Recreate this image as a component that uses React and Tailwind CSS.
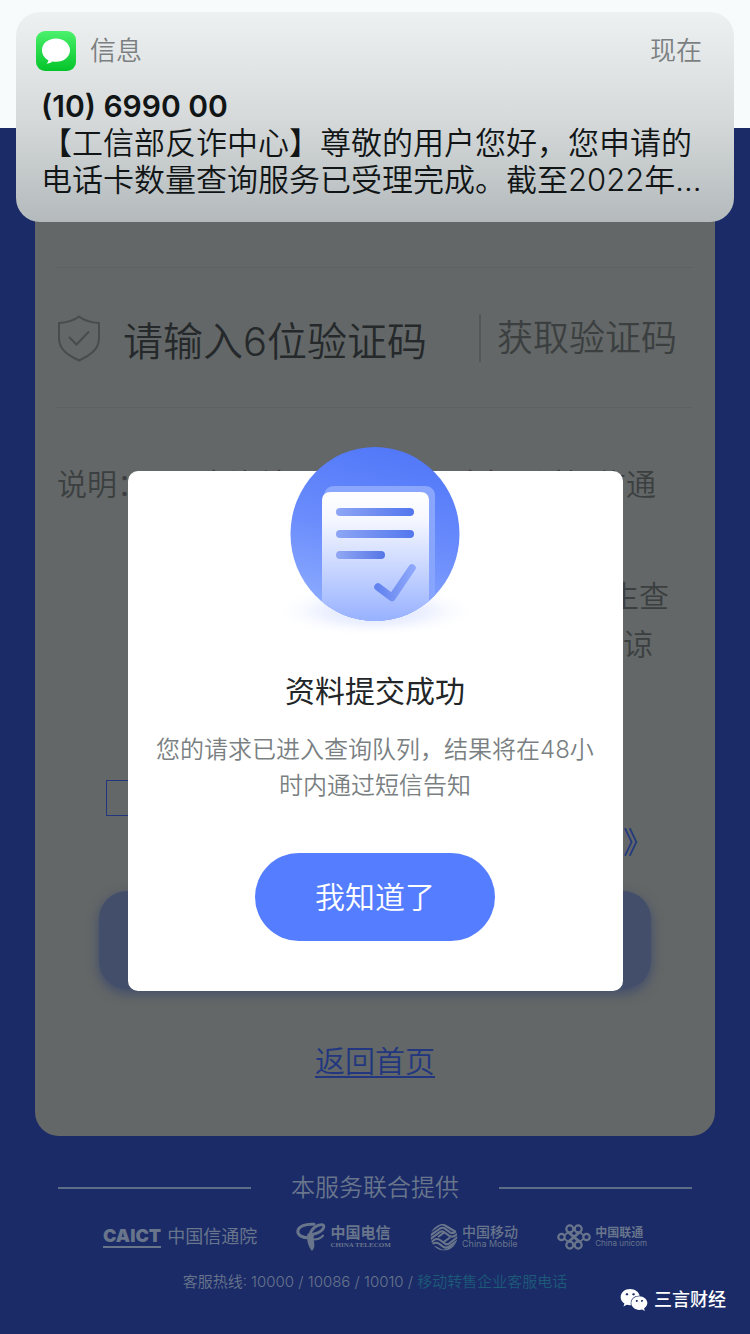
import React from "react";
import { FaWeixin } from "react-icons/fa";

function MessagesIcon() {
  return (
    <svg viewBox="0 0 40 40" className="w-10 h-10 shrink-0" aria-hidden="true">
      <defs>
        <linearGradient id="smsGreen" x1="0" y1="0" x2="0" y2="1">
          <stop offset="0" stopColor="#4bf16c" />
          <stop offset="1" stopColor="#04c42a" />
        </linearGradient>
      </defs>
      <rect width="40" height="40" rx="9" fill="url(#smsGreen)" />
      <path
        d="M20 7.500c-7.900 0-14 5.100-14 11.700 0 4.200 2.500 7.900 6.400 10-.2 1.300-.9 2.500-2 3.400 2.300-.1 4.400-.9 5.900-2.200 1.200.3 2.400.4 3.700.4 7.900 0 14-5.100 14-11.600S27.900 7.500 20 7.500z"
        fill="#fff"
      />
    </svg>
  );
}

function ShieldIcon() {
  return (
    <svg viewBox="0 0 44 48" className="w-11 h-12 shrink-0" fill="none" stroke="#484c4e" strokeWidth="2" aria-hidden="true">
      <path d="M22 2.500C17 6.500 11 8.500 2 9v15c0 11 8 17 20 22.500C34 41 42 35 42 24V9C33 8.500 27 6.500 22 2.500z" strokeLinejoin="round" />
      <path d="M12.500 23.500l7 7L31.500 18" strokeLinecap="round" />
    </svg>
  );
}

function SuccessIcon() {
  return (
    <svg viewBox="0 0 210 190" className="w-[210px] h-[190px]" aria-hidden="true">
      <defs>
        <linearGradient id="disc" x1="0.6" y1="0" x2="0.35" y2="1">
          <stop offset="0" stopColor="#5278f9" />
          <stop offset="0.500" stopColor="#6a8cfc" />
          <stop offset="1" stopColor="#8fadff" />
        </linearGradient>
        <linearGradient id="sheet" x1="0" y1="0" x2="0" y2="1">
          <stop offset="0" stopColor="#fff" />
          <stop offset="0.200" stopColor="#f6f8ff" />
          <stop offset="0.950" stopColor="#9ab3ff" />
        </linearGradient>
        <linearGradient id="sheetBack" x1="0" y1="0" x2="0" y2="1">
          <stop offset="0" stopColor="#8aa6fd" />
          <stop offset="1" stopColor="#86a4ff" />
        </linearGradient>
        <linearGradient id="line" gradientUnits="userSpaceOnUse" x1="66" y1="0" x2="144" y2="0">
          <stop offset="0" stopColor="#8ea6f4" />
          <stop offset="1" stopColor="#5276ee" />
        </linearGradient>
        <linearGradient id="lineShort" gradientUnits="userSpaceOnUse" x1="66" y1="0" x2="115" y2="0">
          <stop offset="0" stopColor="#92a8f4" />
          <stop offset="1" stopColor="#5576e6" />
        </linearGradient>
        <linearGradient id="tick" gradientUnits="userSpaceOnUse" x1="105" y1="0" x2="145" y2="0">
          <stop offset="0" stopColor="#5f80ee" />
          <stop offset="1" stopColor="#90a9fb" />
        </linearGradient>
        <radialGradient id="glow">
          <stop offset="0" stopColor="#dbe4ff" />
          <stop offset="0.500" stopColor="#edf1ff" />
          <stop offset="1" stopColor="#fff" stopOpacity="0" />
        </radialGradient>
        <clipPath id="discClip">
          <ellipse cx="105" cy="87" rx="84.500" ry="87" />
        </clipPath>
      </defs>
      <ellipse cx="105" cy="164" rx="104" ry="26" fill="url(#glow)" />
      <ellipse cx="105" cy="87" rx="84.500" ry="87" fill="url(#disc)" />
      <g clipPath="url(#discClip)">
        <path d="M54 50c0-7 4-11 10-11h91c6 0 10 4 10 10v140H54z" fill="url(#sheetBack)" />
        <path d="M52 54c0-6 3-9 9-9h89c6 0 9 3 9 9v124H52z" fill="url(#sheet)" />
        <rect x="66" y="61" width="78" height="8" rx="4" fill="url(#line)" />
        <rect x="66" y="83" width="78" height="8" rx="4" fill="url(#line)" />
        <rect x="66" y="104" width="49" height="8" rx="4" fill="url(#lineShort)" />
        <path d="M108 140l14 10.500 20-29.500" fill="none" stroke="url(#tick)" strokeWidth="7.500" strokeLinecap="round" strokeLinejoin="round" />
      </g>
    </svg>
  );
}

function TelecomLogo() {
  return (
    <svg viewBox="0 0 30 30" className="w-[30px] h-[30px]" fill="none" stroke="#68758b" strokeLinecap="round" aria-hidden="true">
      <path d="M18 2.300C10 1.500 2 4.500 1.800 9.500 1.800 13.500 7 15.800 12 15.800" strokeWidth="3" />
      <path d="M14 13C15 7 21 2.300 26 2.600c4.500.6 1 8.400-10 9.900" strokeWidth="2.800" />
      <path d="M16.500 17.500c5 .2 8.500-1.200 10.500-3.800" strokeWidth="2.200" />
      <path d="M11.500 11.500c-1 6 .2 12.500 4.500 17.500 2.500-2.500 2.700-5.500 2.100-9-.5-3-.6-5.500 0-8.500z" fill="#68758b" stroke="none" />
    </svg>
  );
}

function MobileLogo() {
  return (
    <svg viewBox="0 0 28 28" className="w-7 h-7" fill="none" stroke="#68758b" aria-hidden="true">
      <defs>
        <clipPath id="cmClip">
          <circle cx="14" cy="14" r="13.300" />
        </clipPath>
      </defs>
      <g clipPath="url(#cmClip)" strokeWidth="2.100">
        <path d="M-1 9.500L9 2.500q3-2 6 0l10 6" />
        <path d="M-1 13.300L10 5.500q2.500-1.600 5 .2l5 3.600q2.500 1.600 5-.2l4-3" />
        <path d="M-1 17.100L10 8.900q2-1.200 4 .2l5 3.600q3 2 6 0l4-3" />
        <path d="M-1 20.900l5-3.900q3-2 6 0l5 3.600q2 1.300 4 0L29 13" />
        <path d="M-1 23.500l4-2.800q3-2 6 0l4 2.900q3 2 6 0L29 16.500" />
        <path d="M2 24.800q3-1.500 5 .2l4 2.200q3 1 7-.7L29 19.500" />
      </g>
      <path d="M8 14l7-5.200M13 19.500l7-5" stroke="#68758b" strokeWidth="2.100" />
    </svg>
  );
}

function UnicomLogo() {
  return (
    <svg viewBox="0 0 34 26" className="w-[34px] h-[26px]" fill="none" stroke="#68758b" strokeWidth="2.200" aria-hidden="true">
      <circle cx="4.500" cy="13" r="3.200" />
      <circle cx="29.500" cy="13" r="3.200" />
      <circle cx="12.800" cy="4.900" r="3.500" />
      <circle cx="21.200" cy="4.900" r="3.500" />
      <circle cx="12.800" cy="21.100" r="3.500" />
      <circle cx="21.200" cy="21.100" r="3.500" />
      <path d="M10 7.500l11 9.500M24 7.500L13 17M10 18.500L21 9M24 18.500L13 9" strokeWidth="2" />
      <path d="M7 11.500l4-3M7 14.500l4 3M27 11.500l-4-3M27 14.500l-4 3" strokeWidth="1.600" />
    </svg>
  );
}

function Notification() {
  return (
    <section className="absolute inset-x-4 top-3 rounded-[24px] bg-linear-to-b from-[#eef1f2] via-[#d6dadb] to-[#b4babc] pt-[19px] pb-6 pl-5 pr-8">
      <div className="flex items-center gap-[14px] text-[26px] leading-10 font-[350] text-[#7b7f81]">
        <MessagesIcon />
        <span className="flex-1">信息</span>
        <time>现在</time>
      </div>
      <div className="mt-[17px] pl-[5px] text-[#111516]">
        <h2 className="text-[30px] leading-9 font-semibold">(10) 6990 00</h2>
        <p className="text-[31px] leading-[37px] font-[350] whitespace-nowrap">
          【工信部反诈中心】尊敬的用户您好，您申请的
          <br />
          电话卡数量查询服务已受理完成。截至2022年...
        </p>
      </div>
    </section>
  );
}

function VerifyCard() {
  return (
    <main className="mx-[35px] rounded-b-[24px] bg-[#636767] px-[22px] pt-[139px] pb-[51px] text-[#3b3f40]">
      <div className="flex h-[141px] items-center border-y border-[#5d6161]">
        <ShieldIcon />
        <input
          type="text"
          aria-label="验证码"
          placeholder="请输入6位验证码"
          className="ml-[22px] h-[60px] min-w-0 flex-1 bg-transparent pt-2 text-[40px] font-[350] text-[#25292b] outline-none placeholder:text-[#25292b]"
        />
        <span className="h-12 w-[2px] bg-[#54585a]" />
        <button type="button" className="mx-4 text-[36px] leading-[48px] font-[350]">
          获取验证码
        </button>
      </div>

      {/* Notes */}
      <div className="mt-[52px] flex text-[30px] leading-[48px] font-[350] whitespace-nowrap">
        <span className="w-[94px] shrink-0">说明：</span>
        <div className="flex min-w-0 flex-1 flex-col items-end">
          <p className="h-24 pr-[37px]">1.查询结果将于48小时内通过短信通</p>
          <p className="mt-4 pr-6">生查</p>
          <p className="pr-10">谅</p>
        </div>
      </div>

      {/* Agreement */}
      <div className="mt-[112px] flex h-[84px] pl-[49px] pr-10">
        <input type="checkbox" aria-label="同意协议" className="h-9 w-9 shrink-0 appearance-none border border-[#22377f]" />
        <a href="#agreement" className="flex-1 self-end text-right text-[30px] leading-[44px] text-[#22377f]">》</a>
      </div>

      <button type="button" aria-label="查询" className="mx-auto mt-[27px] block h-[98px] w-[552px] max-w-full rounded-[28px] bg-[#434e6b] shadow-[0_4px_12px_#3f4b6c]" />

      <div className="mt-12 text-center">
        <a href="#home" className="text-[30px] leading-[48px] font-[350] text-[#22377f] underline underline-offset-4 decoration-2">返回首页</a>
      </div>
    </main>
  );
}

function Footer() {
  return (
    <footer className="pt-[34px] text-[#68758b]">
      <div className="flex items-center gap-10 px-[58px]">
        <span className="h-[2px] flex-1 bg-[#5c6e85]" />
        <h3 className="text-[24px] leading-9 font-[350]">本服务联合提供</h3>
        <span className="h-[2px] flex-1 bg-[#5c6e85]" />
      </div>

      {/* Partners */}
      <div className="mt-[15px] flex h-8 items-center justify-between px-[103px] whitespace-nowrap">
        <div className="flex items-center gap-[6px]">
          <span className="border-b-2 border-[#68758b] text-[18px] leading-5 font-black">CAICT</span>
          <span className="text-[18px] leading-6">中国信通院</span>
        </div>
        <div className="flex items-center gap-1">
          <TelecomLogo />
          <div>
            <p className="text-[15px] leading-4 font-bold">中国电信</p>
            <p className="font-['Liberation_Serif',serif] text-[7px] leading-2 font-bold">CHINA TELECOM</p>
          </div>
        </div>
        <div className="flex items-center gap-1">
          <MobileLogo />
          <div>
            <p className="text-[14px] leading-[14px] font-medium">中国移动</p>
            <p className="text-[9px] leading-[10px]">China Mobile</p>
          </div>
        </div>
        <div className="flex items-center gap-1">
          <UnicomLogo />
          <div>
            <p className="text-[12px] leading-3 font-bold">中国联通</p>
            <p className="text-[8px] leading-2">China unicom</p>
          </div>
        </div>
      </div>

      <p className="mt-[19px] text-center text-[15px] leading-5 font-[350]">
        客服热线: 10000 / 10086 / 10010 / <a href="#hotline" className="text-[#1d5a78]">移动转售企业客服电话</a>
      </p>
    </footer>
  );
}

function SuccessDialog() {
  return (
    <div className="absolute inset-0 flex items-center justify-center pt-32">
      <div role="dialog" aria-labelledby="dialog-title" className="flex w-[66%] flex-col items-center rounded-[10px] bg-white px-6 pb-[50px]">
        <div className="-mt-6">
          <SuccessIcon />
        </div>
        <h1 id="dialog-title" className="mt-9 text-[30px] leading-9 text-[#222628]">资料提交成功</h1>
        <p className="mt-[23px] text-center text-[24px] leading-9 font-[350] text-[#7a7f82]">
          您的请求已进入查询队列，结果将在48小时内通过短信告知
        </p>
        <button type="button" className="mt-[49px] h-[88px] w-60 rounded-full bg-[#557dff] text-[30px] font-[350] text-white">
          我知道了
        </button>
      </div>
    </div>
  );
}

export default function App() {
  return (
    <div className="relative min-h-screen overflow-hidden bg-[#1b2b68] font-[Inter,'Noto_Sans_CJK_SC',sans-serif]">
      <header className="h-32 bg-[#f8fbfc]" />
      <VerifyCard />
      <Footer />

      <SuccessDialog />
      <Notification />

      {/* Account mark */}
      <div className="absolute right-6 bottom-5 flex items-center gap-[6px] text-white">
        <FaWeixin className="h-7 w-7" />
        <span className="text-[18px] leading-7 font-medium">三言财经</span>
      </div>
    </div>
  );
}
